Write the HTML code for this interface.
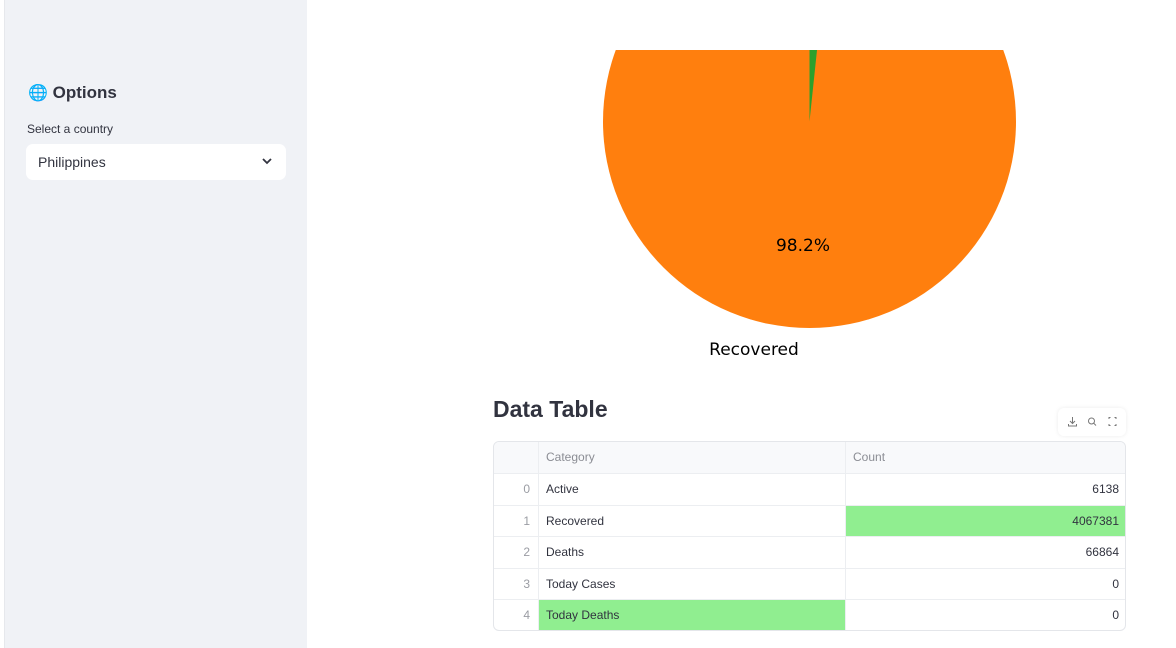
<!DOCTYPE html>
<html><head><meta charset="utf-8"><style>
*{box-sizing:border-box;margin:0;padding:0}
body{width:1176px;height:648px;overflow:hidden;background:#fff;font-family:"Liberation Sans",sans-serif;position:relative;color:#31333f}
.sb{position:absolute;left:4px;top:0;width:303px;height:648px;background:#f0f2f6;border-left:1px solid #e6e8ec}
.h{position:absolute;left:28px;top:83px;font-size:17px;font-weight:bold;color:#31333f}
.lbl{position:absolute;left:27px;top:122px;font-size:12px;color:#31333f}
.sel{position:absolute;left:26px;top:144px;width:260px;height:36px;background:#fff;border-radius:7px;font-size:14px;padding:10px 12px}
.tbl{position:absolute;left:493px;top:441px;width:633px;height:190px;border:1px solid #e4e6ea;border-radius:6px;overflow:hidden}
.r{position:absolute;left:0;width:633px;height:32px;border-top:1px solid #eceef1;font-size:12px}
.r div{position:absolute;top:0;height:31px;line-height:31px}
.c0{left:0;width:44px;text-align:right;padding-right:8px;color:#9a9ca3}
.c1{left:44px;width:307px;border-left:1px solid #eceef1;padding-left:7px}
.c2{left:351px;width:282px;border-left:1px solid #eceef1;text-align:right;padding-right:8px}
.g{background:#90ee90}
</style></head><body>
<div class="sb"></div>
<div class="h"><span style="color:#3ba3e8;font-size:16px">🌐</span> Options</div>
<div class="lbl">Select a country</div>
<div class="sel">Philippines<svg style="position:absolute;right:14px;top:14px" width="10" height="7" viewBox="0 0 10 7"><path d="M1 1l4 4 4-4" stroke="#31333f" stroke-width="1.8" fill="none"/></svg></div>
<svg style="position:absolute;left:0;top:0" width="1176" height="648">
<defs><clipPath id="cp"><rect x="0" y="50" width="1176" height="600"/></clipPath></defs>
<g clip-path="url(#cp)">
<circle cx="809.5" cy="121.5" r="206.5" fill="#ff7f0e"/>
<path d="M809.5 121.5 L809.5 -85 L831.1 -84 Z" fill="#2ca02c"/>
</g>
<text x="803" y="251" font-size="17" text-anchor="middle" font-family="DejaVu Sans" fill="#000">98.2%</text>
<text x="754" y="355" font-size="17" text-anchor="middle" font-family="DejaVu Sans" fill="#000">Recovered</text>
</svg>
<div style="position:absolute;left:493px;top:396px;font-size:23px;font-weight:bold;color:#31333f">Data Table</div>
<div style="position:absolute;left:1058px;top:408px;width:68px;height:28px;background:#fff;border-radius:6px;box-shadow:0 0 4px rgba(0,0,0,.08)">
<svg width="68" height="28" viewBox="0 0 68 28" fill="none" stroke="#777" stroke-width="1">
<path d="M14.5 9v6M12 13l2.5 2.5L17 13M10.5 16v2h8v-2"/>
<circle cx="33.5" cy="13" r="3"/><path d="M35.7 15.2l2.3 2.3"/>
<path d="M51 11v-1.5h1.5M56.5 9.5H58V11M58 16v1.5h-1.5M52.5 17.5H51V16"/>
</svg></div>
<div class="tbl">
<div class="r" style="top:-1px;background:#f8f9fb;color:#8b8d94"><div class="c0"></div><div class="c1">Category</div><div class="c2" style="text-align:left;padding-left:7px">Count</div></div>
<div class="r" style="top:31px"><div class="c0">0</div><div class="c1">Active</div><div class="c2">6138</div></div>
<div class="r" style="top:63px"><div class="c0">1</div><div class="c1">Recovered</div><div class="c2 g">4067381</div></div>
<div class="r" style="top:94px"><div class="c0">2</div><div class="c1">Deaths</div><div class="c2">66864</div></div>
<div class="r" style="top:126px"><div class="c0">3</div><div class="c1">Today Cases</div><div class="c2">0</div></div>
<div class="r" style="top:157px"><div class="c0">4</div><div class="c1 g">Today Deaths</div><div class="c2">0</div></div>
</div>
</body></html>
